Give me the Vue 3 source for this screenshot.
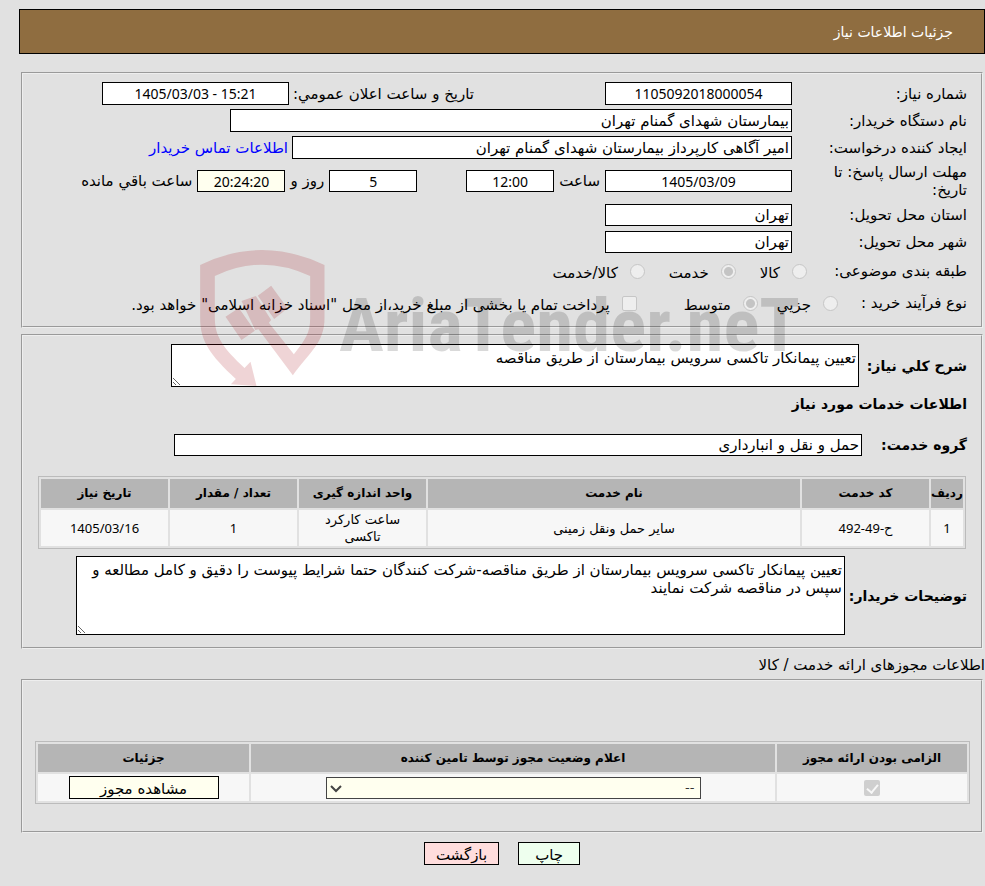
<template>
	<div class="page" dir="rtl">
		<header class="page__header">جزئیات اطلاعات نیاز</header>

		<form class="page__form" @submit.prevent>
			<section class="panel panel--info">
				<div class="row">
					<label class="row__label" for="number">شماره نیاز:</label>
					<input id="number" class="field field--num" v-model="need.number" readonly>
					<label class="row__label--second" for="announced">تاریخ و ساعت اعلان عمومي:</label>
					<input id="announced" class="field field--num" v-model="need.announced" readonly>
				</div>
				<div class="row">
					<label class="row__label" for="buyer">نام دستگاه خریدار:</label>
					<input id="buyer" class="field field--wide" v-model="need.buyer" readonly>
				</div>
				<div class="row">
					<label class="row__label" for="creator">ایجاد کننده درخواست:</label>
					<input id="creator" class="field field--medium" v-model="need.creator" readonly>
					<a class="link" href="#">اطلاعات تماس خریدار</a>
				</div>
				<div class="row row--deadline">
					<label class="row__label row__label--wrap" for="deadline">مهلت ارسال پاسخ: تا تاریخ:</label>
					<input id="deadline" class="field field--num field--low" v-model="need.deadline" readonly>
					<label for="hour">ساعت</label>
					<input id="hour" class="field field--num field--small field--low" v-model="need.hour" readonly>
					<input id="days" class="field field--num field--small field--low field--days" v-model="need.days" readonly>
					<label for="days">روز و</label>
					<input id="left" class="field field--num field--small field--low field--ivory" v-model="need.left" readonly>
					<label for="left">ساعت باقي مانده</label>
				</div>
				<div class="row">
					<label class="row__label" for="province">استان محل تحویل:</label>
					<input id="province" class="field field--low" v-model="need.province" readonly>
				</div>
				<div class="row">
					<label class="row__label" for="city">شهر محل تحویل:</label>
					<input id="city" class="field field--low" v-model="need.city" readonly>
				</div>
				<div class="row row--options" role="radiogroup" aria-labelledby="category">
					<span id="category" class="row__caption">طبقه بندی موضوعی:</span>
					<label v-for="item in categories" :key="item" class="option">
						<input class="option__mark" type="radio" name="category" :value="item" v-model="category" disabled>
						<span class="option__text">{{ item }}</span>
					</label>
				</div>
				<div class="row row--options row--process" role="radiogroup" aria-labelledby="process">
					<span id="process" class="row__caption row__caption--short">نوع فرآیند خرید :</span>
					<label v-for="item in processes" :key="item" class="option">
						<input class="option__mark" type="radio" name="process" :value="item" v-model="process" disabled>
						<span class="option__text">{{ item }}</span>
					</label>
					<label class="option option--bonds">
						<input class="option__mark option__mark--box" type="checkbox" disabled>
						<span class="option__text">پرداخت تمام یا بخشی از مبلغ خرید،از محل "اسناد خزانه اسلامی" خواهد بود.</span>
					</label>
				</div>
			</section>

			<section class="panel panel--services">
				<div class="row row--summary">
					<label class="row__title" for="summary">شرح کلي نیاز:</label>
					<textarea id="summary" class="area area--summary" v-model="need.summary" readonly></textarea>
				</div>
				<h2 class="panel__title">اطلاعات خدمات مورد نیاز</h2>
				<div class="row row--group">
					<label class="row__title" for="group">گروه خدمت:</label>
					<input id="group" class="field field--low field--group" v-model="need.group" readonly>
				</div>
				<table class="grid grid--services">
					<thead>
						<tr>
							<th class="grid__index">ردیف</th>
							<th class="grid__col">کد خدمت</th>
							<th>نام خدمت</th>
							<th class="grid__col">واحد اندازه گیری</th>
							<th class="grid__col">تعداد / مقدار</th>
							<th class="grid__col">تاریخ نیاز</th>
						</tr>
					</thead>
					<tbody>
						<tr v-for="service in services" :key="service.index">
							<td class="grid__num">{{ service.index }}</td>
							<td class="grid__num">{{ service.code }}</td>
							<td>{{ service.name }}</td>
							<td class="grid__unit">{{ service.unit }}</td>
							<td class="grid__num">{{ service.count }}</td>
							<td class="grid__num">{{ service.date }}</td>
						</tr>
					</tbody>
				</table>
				<div class="row row--notes">
					<label class="row__title" for="notes">توضیحات خریدار:</label>
					<textarea id="notes" class="area area--notes" v-model="need.notes" readonly></textarea>
				</div>
			</section>

			<h3 class="page__subtitle">اطلاعات مجوزهای ارائه خدمت / کالا</h3>
			<section class="panel panel--permits">
				<table class="grid grid--permits">
					<thead>
						<tr>
							<th class="grid__required">الزامی بودن ارائه مجوز</th>
							<th>اعلام وضعیت مجوز توسط تامین کننده</th>
							<th class="grid__details">جزئیات</th>
						</tr>
					</thead>
					<tbody>
						<tr>
							<td><input class="tick" type="checkbox" checked disabled aria-label="الزامی بودن ارائه مجوز"></td>
							<td>
								<span class="select">
									<select class="select__field" aria-label="اعلام وضعیت مجوز توسط تامین کننده">
										<option>--</option>
									</select>
									<svg class="select__arrow" viewBox="0 0 12 8"><path d="M1 1l5 5 5-5" /></svg>
								</span>
							</td>
							<td><button class="button button--permit" type="button">مشاهده مجوز</button></td>
						</tr>
					</tbody>
				</table>
			</section>

			<div class="actions">
				<button class="button button--print" type="button">چاپ</button>
				<button class="button button--back" type="button">بازگشت</button>
			</div>
		</form>

		<div class="watermark" dir="ltr" aria-hidden="true">
			<svg class="watermark__logo" viewBox="30 0 374 465">
				<path d="M30 75Q215 -15 403 75V235C403 308 360 335 308 406L205 268L195 270L154 183L197 168L243 240L236 248L311 343C345 300 360 280 360 235V108Q215 40 74 108V235C74 290 100 325 163 384L181 365L199 438L122 433L137 417C60 345 30 305 30 235Z" />
				<path d="M106 230L146 204L194 272L154 300ZM203 167L243 137L292 205L252 237Z" />
			</svg>
			<span class="watermark__text">AriaTender.neT</span>
		</div>
	</div>
</template>

<script setup>
	import {reactive, ref} from "vue";

	const need = reactive({
		number: "1105092018000054",
		announced: "1405/03/03 - 15:21",
		buyer: "بیمارستان شهدای گمنام تهران",
		creator: "امیر آگاهی کارپرداز بیمارستان شهدای گمنام تهران",
		deadline: "1405/03/09",
		hour: "12:00",
		days: "5",
		left: "20:24:20",
		province: "تهران",
		city: "تهران",
		summary: "تعیین پیمانکار تاکسی سرویس بیمارستان از طریق مناقصه",
		group: "حمل و نقل و انبارداری",
		notes: "تعیین پیمانکار تاکسی سرویس بیمارستان از طریق مناقصه-شرکت کنندگان حتما شرایط پیوست را دقیق و کامل مطالعه و سپس در مناقصه شرکت نمایند",
	});

	const categories = ["کالا", "خدمت", "کالا/خدمت"];
	const category = ref("خدمت");

	const processes = ["جزیي", "متوسط"];
	const process = ref("متوسط");

	const services = [
		{
			index: 1,
			code: "ح-49-492",
			name: "سایر حمل ونقل زمینی",
			unit: "ساعت کارکرد تاکسی",
			count: 1,
			date: "1405/03/16",
		},
	];
</script>

<style>
	body {
		background: #e1e1e1;
	}
</style>

<style scoped>
	.page {
		position: relative;
		padding-top: 9px;
		color: #000;
		font-family: "DejaVu Sans", sans-serif;
		font-size: 15px;
		line-height: 18px;
	}

	.page *,
	.page {
		box-sizing: border-box;
	}

	.page__header {
		margin-left: 19px;
		padding: 13px 31px 12px;
		border: 1px solid #000;
		background: #8f6d40;
		color: #fff;
		font-size: 14px;
	}

	.page__form {
		padding-top: 18px;
	}

	.page__subtitle {
		margin: 0;
		padding: 7px 0 5px;
		font-size: 15px;
		font-weight: normal;
	}

	.panel {
		margin: 0 2px 0 21px;
		border: 2px groove #eee;
	}

	.panel--info {
		display: flex;
		flex-direction: column;
		gap: 4px;
		padding: 8px 14px 9px;
	}

	.panel--services {
		margin-top: 6px;
		padding: 8px 14px 12px;
	}

	.panel--permits {
		padding: 60px 11px 27px 12px;
	}

	.panel__title {
		margin: 8px 0 20px;
		font-size: 14px;
	}

	.row {
		display: flex;
		align-items: center;
		gap: 4px;
		min-height: 23px;
		white-space: nowrap;
	}

	.row--deadline {
		gap: 5px;
	}

	.row__label {
		flex: 0 0 171px;
	}

	.row__label--wrap {
		flex-basis: 170px;
		padding-left: 32px;
		white-space: normal;
	}

	.row__label--second {
		margin-right: 127px;
	}

	.row__title {
		min-width: 101px;
		font-size: 14px;
		font-weight: bold;
	}

	.row--options {
		min-height: 28px;
		gap: 24px;
	}

	.row--process {
		gap: 19px;
	}

	.row__caption {
		flex: 0 0 136px;
	}

	.row__caption--short {
		flex-basis: 110px;
	}

	.row--summary {
		gap: 7px;
	}

	.row--group {
		margin-bottom: 20px;
	}

	.row--notes {
		margin-top: 7px;
	}

	.field {
		flex: 0 1 187px;
		min-width: 0;
		height: 23px;
		padding: 1px 2px;
		border: 1px solid #000;
		border-radius: 0;
		outline: none;
		background: #fff;
		color: #000;
		font: 15px "DejaVu Sans", sans-serif;
	}

	.field--num {
		direction: ltr;
		text-align: center;
		font: 14px "Noto Sans", sans-serif;
	}

	.field--low {
		height: 22px;
	}

	.field--wide {
		flex-basis: 562px;
	}

	.field--medium {
		flex-basis: 500px;
	}

	.field--small {
		flex-basis: 88px;
	}

	.field--days {
		margin-right: 44px;
	}

	.field--group {
		flex-basis: 688px;
	}

	.field--ivory {
		background: #ffffef;
	}

	.link {
		color: #00f;
		text-decoration: none;
	}

	.option {
		display: flex;
		align-items: center;
		gap: 12px;
	}

	.option--bonds {
		margin-right: 28px;
	}

	.option__text {
		padding-top: 4px;
	}

	.option__mark {
		appearance: none;
		width: 15px;
		height: 15px;
		margin: 0;
		border: 1px solid #c6c6c6;
		border-radius: 50%;
		background: #eee;
	}

	.option__mark:checked {
		background: radial-gradient(circle, #c4c4c4 4px, #eee 5px);
	}

	.option__mark--box {
		border-radius: 2px;
	}

	.area {
		padding: 4px 2px;
		border: 1px solid #000;
		outline: none;
		background: #fff;
		color: #000;
		font: 15px/18px "DejaVu Sans", sans-serif;
	}

	.area--summary {
		flex: 0 1 688px;
		height: 43px;
	}

	.area--notes {
		flex: 0 1 769px;
		height: 79px;
	}

	.grid {
		width: 100%;
		border: 1px solid #bbb;
		border-spacing: 2px;
		table-layout: fixed;
		font-size: 13px;
		line-height: 17px;
		text-align: center;
	}

	.grid th {
		height: 29px;
		padding: 0;
		background: #b5b5b5;
		font-size: 12px;
	}

	.grid td {
		height: 36px;
		padding: 1px;
		background: #f7f7f7;
	}

	.grid--services {
		width: calc(100% - 2px);
		margin: 0 1px;
	}

	.grid--permits th {
		height: 28px;
	}

	.grid--permits td {
		height: 27px;
	}

	.grid__index {
		width: 32px;
	}

	.grid__col {
		width: 127px;
	}

	.grid .grid__unit {
		padding: 1px 20px;
	}

	.grid__num {
		font-family: "Noto Sans", "DejaVu Sans", sans-serif;
	}

	.grid__required {
		width: 190px;
	}

	.grid__details {
		width: 211px;
	}

	.tick {
		display: block;
		appearance: none;
		width: 16px;
		height: 16px;
		margin: 0 auto;
		border-radius: 2px;
		background: #cfcfcf;
	}

	.tick::after {
		content: "";
		display: block;
		width: 5px;
		height: 9px;
		margin: 2px auto 0;
		border: solid #f7f7f7;
		border-width: 0 2px 2px 0;
		transform: rotate(40deg);
	}

	.select {
		display: block;
		position: relative;
		width: 375px;
		max-width: 100%;
		margin: 0 auto;
	}

	.select__field {
		display: block;
		appearance: none;
		width: 100%;
		height: 22px;
		padding: 0 5px;
		border: 1px solid #444;
		border-radius: 0;
		background: #ffffef;
		color: #333;
		font: 13px "DejaVu Sans", sans-serif;
	}

	.select__arrow {
		position: absolute;
		top: 8px;
		left: 4px;
		width: 12px;
		height: 8px;
		fill: none;
		stroke: #444;
		stroke-width: 2;
		pointer-events: none;
	}

	.button {
		height: 23px;
		padding: 2px 11px 0;
		border: 1px solid #000;
		border-radius: 0;
		color: #000;
		font: 15px/18px "DejaVu Sans", sans-serif;
	}

	.button--permit {
		display: block;
		width: 150px;
		margin: 0 auto;
		background: #ffffef;
	}

	.button--print {
		min-width: 62px;
		background: #efe;
	}

	.button--back {
		min-width: 75px;
		background: #fdd;
	}

	.actions {
		display: flex;
		justify-content: center;
		gap: 19px;
		padding: 9px 0 20px 19px;
	}

	.watermark {
		position: absolute;
		top: 240px;
		left: 200px;
		display: flex;
		gap: 14px;
		pointer-events: none;
	}

	.watermark__logo {
		width: 125px;
		height: 155px;
		fill: rgba(160, 0, 10, 0.17);
	}

	.watermark__text {
		padding-top: 40px;
		color: rgba(0, 0, 0, 0.15);
		font: bold 75px/90px "Roboto Condensed", "DejaVu Sans Condensed", sans-serif;
	}
</style>
